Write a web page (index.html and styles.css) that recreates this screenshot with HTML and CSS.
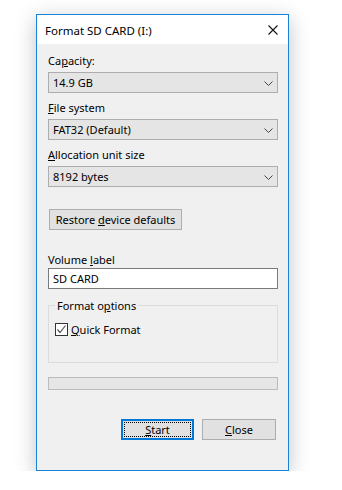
FILE: index.html
```html
<!DOCTYPE html>
<html lang="en">
<head>
    <meta charset="UTF-8">
    <title>Format SD CARD (I:)</title>
    <link rel="stylesheet" href="styles.css">
</head>
<body>
    <div class="window">
        <div class="titlebar">
            <span class="title">Format SD CARD (I:)</span>
            <svg class="close-x" width="10" height="10" viewBox="0 0 10 10">
                <path d="M0.5 0.5 L9.5 9.5 M9.5 0.5 L0.5 9.5" stroke="#111" stroke-width="1.1" fill="none"/>
            </svg>
        </div>
        <div class="content">
            <div class="label first">Ca<u>p</u>acity:</div>
            <div class="combo">
                <span>14.9 GB</span>
                <svg width="9" height="5" viewBox="0 0 9 5"><polyline points="0.5,0.5 4.5,4.5 8.5,0.5" stroke="#444" fill="none"/></svg>
            </div>

            <div class="label"><u>F</u>ile system</div>
            <div class="combo">
                <span>FAT32 (Default)</span>
                <svg width="9" height="5" viewBox="0 0 9 5"><polyline points="0.5,0.5 4.5,4.5 8.5,0.5" stroke="#444" fill="none"/></svg>
            </div>

            <div class="label"><u>A</u>llocation unit size</div>
            <div class="combo">
                <span>8192 bytes</span>
                <svg width="9" height="5" viewBox="0 0 9 5"><polyline points="0.5,0.5 4.5,4.5 8.5,0.5" stroke="#444" fill="none"/></svg>
            </div>

            <button class="btn restore">Restore <u>d</u>evice defaults</button>

            <div class="label volume">Volume <u>l</u>abel</div>
            <div class="textbox">SD CARD</div>

            <fieldset class="options">
                <legend>Format o<u>p</u>tions</legend>
                <div class="check-row">
                    <span class="checkbox">
                        <svg width="11" height="11" viewBox="0 0 11 11"><polyline points="1.5,5.5 4,8.5 9.5,1.5" stroke="#555" stroke-width="1.2" fill="none"/></svg>
                    </span>
                    <span><u>Q</u>uick Format</span>
                </div>
            </fieldset>

            <div class="progress"></div>

            <div class="actions">
                <button class="btn start"><span class="focus"><u>S</u>tart</span></button>
                <button class="btn close"><u>C</u>lose</button>
            </div>
        </div>
    </div>
</body>
</html>
```

FILE: styles.css
```css
body {
    margin: 0;
    background: #ffffff;
    font-family: "Noto Sans", sans-serif;
    font-size: 11px;
    color: #000000;
}
.window {
    margin: 14px 0 0 36px;
    width: 253px;
    height: 457px;
    box-sizing: border-box;
    border: 1px solid #1883d7;
    background: #f0f0f0;
    box-shadow: 0 5px 20px rgba(0, 0, 0, 0.24);
}
.titlebar {
    height: 29px;
    background: #ffffff;
    display: flex;
    align-items: center;
    justify-content: space-between;
    padding: 0 10px 0 8px;
}
.title {
    font-size: 11.5px;
    padding-top: 1px;
}
.close-x {
    display: block;
}
.content {
    padding: 0 10px 0 11px;
    display: flex;
    flex-direction: column;
}
.label {
    line-height: 15px;
    margin-top: 7px;
}
.label.first {
    margin-top: 9px;
}
.label.volume {
    margin-top: 22px;
}
.combo {
    margin-top: 4px;
    height: 21px;
    box-sizing: border-box;
    border: 1px solid #adadad;
    background: #e5e5e5;
    display: flex;
    align-items: center;
    justify-content: space-between;
    padding: 0 4px 0 4px;
    line-height: 15px;
}
.combo svg {
    display: block;
    margin-top: 1px;
}
.btn {
    font-family: inherit;
    font-size: 11px;
    color: #000000;
    height: 21px;
    box-sizing: border-box;
    border: 1px solid #adadad;
    background: #e1e1e1;
    padding: 0;
    margin: 0;
    line-height: 15px;
}
.restore {
    margin-top: 22px;
    align-self: flex-start;
    margin-left: 1px;
    width: 133px;
}
.textbox {
    margin-top: 1px;
    height: 21px;
    box-sizing: border-box;
    border: 1px solid #7a7a7a;
    background: #ffffff;
    padding: 0 4px;
    line-height: 19px;
}
.options {
    margin: 9px 0 0 0;
    height: 65px;
    box-sizing: border-box;
    border: 1px solid #dcdcdc;
    padding: 0 6px;
    min-width: 0;
}
.options legend {
    padding: 0 2px;
    line-height: 15px;
}
.check-row {
    margin-top: 9px;
    display: flex;
    align-items: center;
    line-height: 15px;
}
.checkbox {
    width: 13px;
    height: 13px;
    box-sizing: border-box;
    border: 1px solid #333333;
    background: #ffffff;
    display: flex;
    align-items: center;
    justify-content: center;
    margin-right: 3px;
}
.checkbox svg {
    display: block;
}
.progress {
    margin-top: 14px;
    height: 13px;
    box-sizing: border-box;
    border: 1px solid #bcbcbc;
    background: #e6e6e6;
}
.actions {
    margin-top: 29px;
    display: flex;
    justify-content: flex-end;
    gap: 8px;
    padding-right: 2px;
}
.start {
    width: 73px;
    border: 2px solid #0078d7;
    padding: 1px;
}
.start .focus {
    display: flex;
    align-items: center;
    justify-content: center;
    height: 100%;
    box-sizing: border-box;
    border: 1px dotted #000000;
}
.close {
    width: 74px;
}
```
